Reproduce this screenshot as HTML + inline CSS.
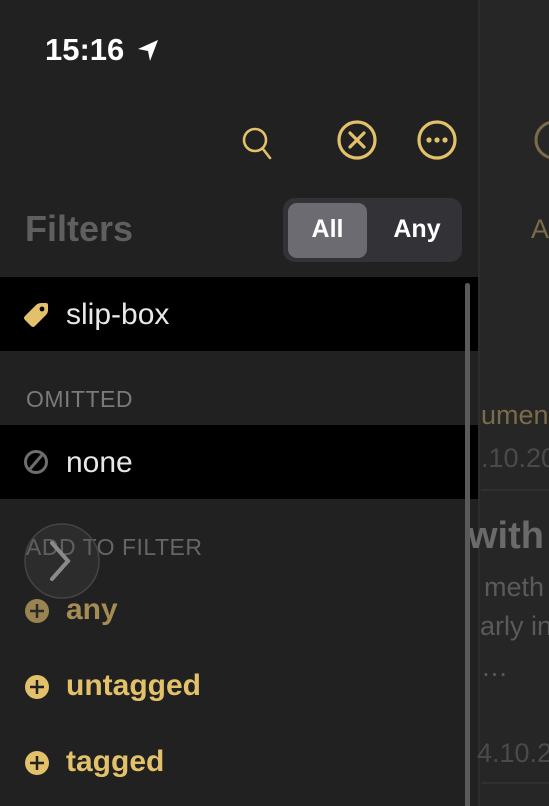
<!DOCTYPE html>
<html><head><style>
html,body{margin:0;width:549px;height:806px;overflow:hidden}
body{background:#212121;position:relative;font-family:"Liberation Sans",sans-serif;}
.a{position:absolute;white-space:nowrap}
</style></head><body>
<div class="a" style="left:478px;top:0;width:71px;height:806px;background:#262626;border-left:2px solid #2c2c2c"></div>
<svg class="a" style="left:530px;top:118px" width="30" height="44"><circle cx="24" cy="22" r="18" fill="none" stroke="#7a6c48" stroke-width="3"/></svg>
<div class="a" style="left:531px;top:214px;font-size:27px;color:#7a6c48">A</div>
<div class="a" style="left:481px;top:400px;font-size:27px;color:#7a6c48">umen</div>
<div class="a" style="left:481px;top:443px;font-size:27px;color:#4a4a4a">.10.20</div>
<div class="a" style="left:481px;top:489px;width:68px;height:2px;background:#303030"></div>
<div class="a" style="left:468px;top:515px;font-size:38px;font-weight:bold;color:#6a6a6a">with</div>
<div class="a" style="left:484px;top:572px;font-size:27px;color:#5a5a5a">meth</div>
<div class="a" style="left:480px;top:611px;font-size:27px;color:#5a5a5a">arly in</div>
<div class="a" style="left:481px;top:652px;font-size:27px;color:#5a5a5a">…</div>
<div class="a" style="left:477px;top:738px;font-size:27px;color:#4a4a4a">4.10.2</div>
<div class="a" style="left:481px;top:782px;width:68px;height:2px;background:#303030"></div>

<div class="a" style="left:45px;top:32px;font-size:31px;font-weight:bold;color:#fff">15:16</div>
<svg class="a" style="left:136px;top:38px" width="26" height="26"><path d="M2 11 L22 2 L14 23 L12 13 Z" fill="#fff"/></svg>

<svg class="a" style="left:236px;top:118px" width="56" height="48"><circle cx="19" cy="22" r="11" fill="none" stroke="#e3c16a" stroke-width="2.6"/><path d="M27 31 L34 40" stroke="#e3c16a" stroke-width="2.6" stroke-linecap="round"/></svg>
<svg class="a" style="left:334px;top:118px" width="48" height="46"><circle cx="23" cy="22" r="18" fill="none" stroke="#e3c16a" stroke-width="3.2"/><path d="M16 15 L30 29 M30 15 L16 29" stroke="#e3c16a" stroke-width="3.2" stroke-linecap="round"/></svg>
<svg class="a" style="left:414px;top:118px" width="48" height="46"><circle cx="23" cy="22" r="18" fill="none" stroke="#e3c16a" stroke-width="3.2"/><circle cx="15" cy="22" r="2.6" fill="#e3c16a"/><circle cx="23" cy="22" r="2.6" fill="#e3c16a"/><circle cx="31" cy="22" r="2.6" fill="#e3c16a"/></svg>

<div class="a" style="left:25px;top:208px;font-size:36px;font-weight:bold;color:#5f5f5f">Filters</div>
<div class="a" style="left:283px;top:198px;width:179px;height:64px;border-radius:12px;background:#333337"></div>
<div class="a" style="left:288px;top:203px;width:79px;height:55px;border-radius:9px;background:#6c6b72"></div>
<div class="a" style="left:288px;top:215px;width:79px;text-align:center;font-size:25px;font-weight:bold;color:#fff">All</div>
<div class="a" style="left:372px;top:215px;width:90px;text-align:center;font-size:25px;font-weight:bold;color:#fff">Any</div>

<div class="a" style="left:0;top:277px;width:478px;height:74px;background:#000"></div>
<svg class="a" style="left:22px;top:301px" width="28" height="28"><path d="M14 4 Q16 2 20 2 L24 2 Q26 2 26 4 L26 9 Q26 12 24 14 L13 25 Q11 27 9 25 L3 19 Q1 17 3 15 Z" fill="#e3c16a"/><circle cx="20" cy="8" r="2.4" fill="#000"/></svg>
<div class="a" style="left:66px;top:298px;font-size:30px;color:#e8e8e8">slip-box</div>

<div class="a" style="left:26px;top:386px;font-size:23px;color:#7a7a7a;letter-spacing:0.5px">OMITTED</div>

<div class="a" style="left:0;top:425px;width:478px;height:74px;background:#000"></div>
<svg class="a" style="left:22px;top:448px" width="28" height="28"><circle cx="14" cy="14" r="10.5" fill="none" stroke="#6e6e6e" stroke-width="3"/><path d="M20 7 L8 21" stroke="#6e6e6e" stroke-width="3"/></svg>
<div class="a" style="left:66px;top:446px;font-size:30px;color:#e8e8e8">none</div>

<div class="a" style="left:26px;top:534px;font-size:23px;color:#666;letter-spacing:0.5px">ADD TO FILTER</div>
<svg class="a" style="left:20px;top:519px" width="84" height="84"><circle cx="42" cy="42" r="37" fill="rgba(80,80,80,0.25)" stroke="#444" stroke-width="1.5"/><path d="M32 24 L48 42 L32 60" fill="none" stroke="#8a8a8a" stroke-width="4" stroke-linecap="round"/></svg>

<svg class="a" style="left:24px;top:598px" width="26" height="26"><circle cx="13" cy="13" r="12" fill="#9a8350"/><path d="M13 6 V20 M6 13 H20" stroke="#2a2a2a" stroke-width="2.5"/></svg>
<div class="a" style="left:66px;top:593px;font-size:30px;font-weight:bold;color:#a58c55">any</div>
<svg class="a" style="left:24px;top:674px" width="26" height="26"><circle cx="13" cy="13" r="12" fill="#e3c16a"/><path d="M13 6 V20 M6 13 H20" stroke="#212121" stroke-width="2.5"/></svg>
<div class="a" style="left:66px;top:669px;font-size:30px;font-weight:bold;color:#e3c16a">untagged</div>
<svg class="a" style="left:24px;top:750px" width="26" height="26"><circle cx="13" cy="13" r="12" fill="#e3c16a"/><path d="M13 6 V20 M6 13 H20" stroke="#212121" stroke-width="2.5"/></svg>
<div class="a" style="left:66px;top:745px;font-size:30px;font-weight:bold;color:#e3c16a">tagged</div>

<div class="a" style="left:465px;top:283px;width:5px;height:523px;border-radius:3px 3px 0 0;background:#5a5a5a"></div>
</body></html>
